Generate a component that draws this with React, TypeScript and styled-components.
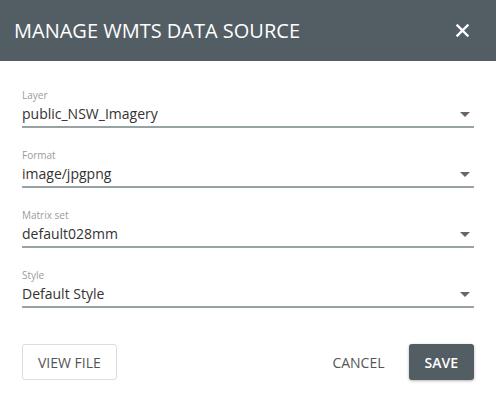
import styled, { createGlobalStyle } from "styled-components";

const GlobalStyle = createGlobalStyle`
  html, body {
    margin: 0;
    padding: 0;
    background: #ffffff;
  }
  body {
    font-family: "Open Sans", "Liberation Sans", sans-serif;
  }
`;

const Dialog = styled.div`
  width: 496px;
  height: 403px;
  background: #ffffff;
  display: flex;
  flex-direction: column;
`;

const Header = styled.header`
  height: 61px;
  flex-shrink: 0;
  background: #535d64;
  display: flex;
  align-items: center;
  justify-content: space-between;
  padding: 0 22px 0 14px;
`;

const Title = styled.h1`
  margin: 0;
  font-size: 20px;
  font-weight: 400;
  color: #ffffff;
`;

const CloseButton = styled.button`
  border: none;
  background: none;
  padding: 0;
  width: 24px;
  height: 24px;
  display: flex;
  align-items: center;
  justify-content: center;
  cursor: pointer;
`;

const Body = styled.div`
  padding: 27px 22px 0;
  display: flex;
  flex-direction: column;
  gap: 20px;
`;

const Field = styled.label`
  display: flex;
  flex-direction: column;
  gap: 2px;
`;

const FieldLabel = styled.span`
  font-size: 10px;
  line-height: 14px;
  color: #9b9b9b;
`;

const SelectRow = styled.div`
  display: flex;
  align-items: center;
  justify-content: space-between;
  height: 20px;
  padding-bottom: 2px;
  border-bottom: 2px solid #97a3a3;
`;

const Value = styled.span`
  font-size: 14px;
  line-height: 20px;
  color: #333333;
`;

const Caret = styled.span`
  width: 0;
  height: 0;
  margin-right: 4px;
  border-left: 5px solid transparent;
  border-right: 5px solid transparent;
  border-top: 5px solid #666666;
`;

const Footer = styled.div`
  display: flex;
  align-items: center;
  justify-content: space-between;
  padding: 36px 22px 0;
`;

const Actions = styled.div`
  display: flex;
  align-items: center;
  gap: 8px;
`;

const Button = styled.button<{ $variant?: "outline" | "flat" | "primary" }>`
  height: 36px;
  padding: 0 15px;
  font-family: "Open Sans", "Liberation Sans", sans-serif;
  font-size: 14px;
  font-weight: ${(p) => (p.$variant === "primary" ? 600 : 400)};
  border-radius: 3px;
  cursor: pointer;
  color: ${(p) => (p.$variant === "primary" ? "#ffffff" : "#555555")};
  background: ${(p) => (p.$variant === "primary" ? "#535d64" : "#ffffff")};
  border: 1px solid
    ${(p) => (p.$variant === "outline" ? "#dddddd" : "transparent")};
  box-shadow: ${(p) =>
    p.$variant === "primary" ? "0 1px 3px rgba(0,0,0,0.3)" : "none"};
`;

const fields = [
  { label: "Layer", value: "public_NSW_Imagery" },
  { label: "Format", value: "image/jpgpng" },
  { label: "Matrix set", value: "default028mm" },
  { label: "Style", value: "Default Style" },
];

export default function App() {
  return (
    <>
      <GlobalStyle />
      <Dialog>
        <Header>
          <Title>MANAGE WMTS DATA SOURCE</Title>
          <CloseButton aria-label="close">
            <svg width="13" height="13" viewBox="0 0 13 13">
              <path
                d="M1.5 1.5 L11.5 11.5 M11.5 1.5 L1.5 11.5"
                stroke="#ffffff"
                strokeWidth="2.4"
                strokeLinecap="square"
              />
            </svg>
          </CloseButton>
        </Header>
        <Body>
          {fields.map((f) => (
            <Field key={f.label}>
              <FieldLabel>{f.label}</FieldLabel>
              <SelectRow>
                <Value>{f.value}</Value>
                <Caret />
              </SelectRow>
            </Field>
          ))}
        </Body>
        <Footer>
          <Button $variant="outline">VIEW FILE</Button>
          <Actions>
            <Button $variant="flat">CANCEL</Button>
            <Button $variant="primary">SAVE</Button>
          </Actions>
        </Footer>
      </Dialog>
    </>
  );
}
